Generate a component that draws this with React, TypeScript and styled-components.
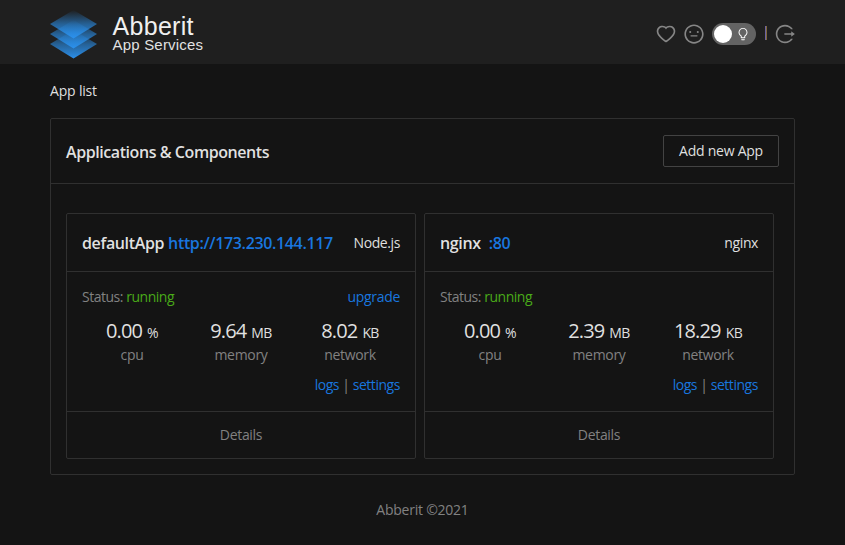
import React from "react";
import styled, { createGlobalStyle } from "styled-components";
import { AiOutlineHeart, AiOutlineMeh, AiOutlineBulb, AiOutlineLogout } from "react-icons/ai";

const GlobalStyle = createGlobalStyle`
  *, *::before, *::after { box-sizing: border-box; }
  body {
    margin: 0;
    background: #141414;
    color: rgba(255, 255, 255, 0.88);
    font: 14px/22px "Open Sans", "Noto Sans", sans-serif;
    letter-spacing: -0.3px;
    overflow: hidden;
  }
`;

const Page = styled.div`
  height: 545px;
  background: #141414;
`;

const Header = styled.header`
  display: flex;
  align-items: center;
  justify-content: space-between;
  height: 64px;
  padding: 0 50px;
  background: #1f1f1f;
`;

const Brand = styled.div`
  display: flex;
  align-items: center;
  height: 64px;
`;

const LogoMark = styled.svg`
  display: block;
  width: 47px;
  height: 50px;
  margin-top: 5px;
`;

const BrandText = styled.div`
  margin: 3px 0 0 15.5px;
  font-family: "Liberation Sans", Arial, sans-serif;
  letter-spacing: 0;
`;

const BrandName = styled.div`
  font-size: 25px;
  line-height: 22px;
  letter-spacing: 0.3px;
  color: #f0f0f0;
`;

const BrandSub = styled.div`
  font-size: 15px;
  line-height: 15px;
  letter-spacing: 0.2px;
`;

const Tools = styled.div`
  display: flex;
  align-items: center;
  height: 22px;
  margin-top: 4px;
  color: #868686;
  svg { display: block; }
`;

const ToolIcon = styled.span`
  width: 22px;
  height: 22px;
  margin-right: 6px;
  &:last-child { margin-right: -1px; }
`;

const Switch = styled.span`
  display: flex;
  align-items: center;
  justify-content: space-between;
  width: 44px;
  height: 22px;
  margin-left: 1px;
  padding: 0 6px 0 2px;
  border-radius: 11px;
  background: #636363;
  color: #fff;
`;

const Knob = styled.span`
  width: 18px;
  height: 18px;
  border-radius: 50%;
  background: #fff;
`;

const ToolDivider = styled.span`
  width: 2px;
  height: 14px;
  margin: 0 7px 2px 9px;
  background: linear-gradient(90deg, #6c62a0 50%, #80693b 50%);
`;

const Main = styled.main`
  padding: 0 50px;
`;

const Crumb = styled.div`
  padding: 16px 0;
  letter-spacing: -0.18px;
`;

const Panel = styled.section`
  height: 357px;
  border: 1px solid #303030;
  border-radius: 2px;
`;

const PanelHead = styled.div`
  display: flex;
  align-items: center;
  justify-content: space-between;
  height: 65px;
  padding: 2px 15px 0;
  border-bottom: 1px solid #303030;
`;

const PanelTitle = styled.div`
  font-size: 16px;
  font-weight: 600;
  letter-spacing: -0.43px;
`;

const AddButton = styled.button`
  width: 116px;
  height: 32px;
  margin-bottom: 2px;
  padding: 0;
  border: 1px solid #434343;
  border-radius: 2px;
  background: transparent;
  color: inherit;
  font: inherit;
  letter-spacing: -0.25px;
`;

const Cards = styled.div`
  display: flex;
  gap: 8px;
  padding: 29px 15px 0;
`;

const Card = styled.article`
  width: 350px;
  height: 246px;
  border: 1px solid #303030;
  border-radius: 2px;
`;

const CardHead = styled.div`
  display: flex;
  align-items: center;
  justify-content: space-between;
  height: 58px;
  padding: 1px 15px 0;
  border-bottom: 1px solid #303030;
`;

const CardTitle = styled.div<{ $gap: number }>`
  display: flex;
  gap: ${(p) => p.$gap}px;
  font-size: 16px;
  font-weight: 600;
  letter-spacing: -0.36px;
`;

const Runtime = styled.span`
  letter-spacing: -0.4px;
`;

const Link = styled.a`
  color: #1976df;
  text-decoration: none;
  cursor: pointer;
`;

const CardBody = styled.div`
  height: 139px;
  padding: 14px 15px 0;
  color: rgba(255, 255, 255, 0.47);
`;

const Line = styled.div`
  display: flex;
  justify-content: space-between;
`;

const Status = styled.span`
  letter-spacing: -0.48px;
`;

const Running = styled.span`
  color: #49aa19;
`;

const Stats = styled.div`
  display: grid;
  grid-template-columns: repeat(3, 109px);
  justify-content: center;
  margin-top: 11px;
  text-align: center;
`;

const Value = styled.div`
  font-size: 20px;
  line-height: 24px;
  letter-spacing: -0.85px;
  color: rgba(255, 255, 255, 0.88);
`;

const Unit = styled.span`
  margin-left: 5px;
  font-size: 14px;
  letter-spacing: -0.6px;
`;

const StatLabel = styled.div`
  margin-top: -1px;
  line-height: 22px;
`;

const CardLinks = styled.div`
  margin-top: 8px;
  text-align: right;
  letter-spacing: -0.45px;
`;

const Details = styled.div`
  height: 47px;
  padding-top: 12px;
  border-top: 1px solid #303030;
  color: rgba(255, 255, 255, 0.47);
  text-align: center;
`;

const Footer = styled.footer`
  padding-top: 24px;
  color: rgba(255, 255, 255, 0.47);
  letter-spacing: -0.24px;
  text-align: center;
`;

type App = {
  name: string;
  address: string;
  gap: number;
  runtime: string;
  upgradable: boolean;
  stats: { value: string; unit: string; label: string }[];
};

const apps: App[] = [
  {
    name: "defaultApp",
    address: "http://173.230.144.117",
    gap: 4,
    runtime: "Node.js",
    upgradable: true,
    stats: [
      { value: "0.00", unit: "%", label: "cpu" },
      { value: "9.64", unit: "MB", label: "memory" },
      { value: "8.02", unit: "KB", label: "network" },
    ],
  },
  {
    name: "nginx",
    address: ":80",
    gap: 8,
    runtime: "nginx",
    upgradable: false,
    stats: [
      { value: "0.00", unit: "%", label: "cpu" },
      { value: "2.39", unit: "MB", label: "memory" },
      { value: "18.29", unit: "KB", label: "network" },
    ],
  },
];

function Logo() {
  return (
    <LogoMark viewBox="0 0 47 50">
      <defs>
        <linearGradient id="layer" x1="0" y1="0" x2="0" y2="1">
          <stop offset="0" stopColor="#2a8ae0" stopOpacity="0" />
          <stop offset="0.5" stopColor="#2a8ae0" stopOpacity="0.62" />
          <stop offset="1" stopColor="#2b90ec" />
        </linearGradient>
      </defs>
      {[20, 10, 0].map((y) => (
        <path key={y} d={`M23.5 ${y}L47 ${y + 14}L23.5 ${y + 28.5}L0 ${y + 14}Z`} fill="url(#layer)" />
      ))}
    </LogoMark>
  );
}

function AppCard({ app }: { app: App }) {
  return (
    <Card>
      <CardHead>
        <CardTitle $gap={app.gap}>
          <span>{app.name}</span>
          <Link>{app.address}</Link>
        </CardTitle>
        <Runtime>{app.runtime}</Runtime>
      </CardHead>
      <CardBody>
        <Line>
          <Status>Status: <Running>running</Running></Status>
          {app.upgradable && <Link>upgrade</Link>}
        </Line>
        <Stats>
          {app.stats.map((s) => (
            <div key={s.label}>
              <Value>{s.value}<Unit>{s.unit}</Unit></Value>
              <StatLabel>{s.label}</StatLabel>
            </div>
          ))}
        </Stats>
        <CardLinks><Link>logs</Link> | <Link>settings</Link></CardLinks>
      </CardBody>
      <Details>Details</Details>
    </Card>
  );
}

export default function App() {
  return (
    <Page>
      <GlobalStyle />
      <Header>
        <Brand>
          <Logo />
          <BrandText>
            <BrandName>Abberit</BrandName>
            <BrandSub>App Services</BrandSub>
          </BrandText>
        </Brand>
        <Tools>
          <ToolIcon><AiOutlineHeart size={22} /></ToolIcon>
          <ToolIcon><AiOutlineMeh size={22} /></ToolIcon>
          <Switch><Knob /><AiOutlineBulb size={14} /></Switch>
          <ToolDivider />
          <ToolIcon><AiOutlineLogout size={22} /></ToolIcon>
        </Tools>
      </Header>
      <Main>
        <Crumb>App list</Crumb>
        <Panel>
          <PanelHead>
            <PanelTitle>Applications &amp; Components</PanelTitle>
            <AddButton>Add new App</AddButton>
          </PanelHead>
          <Cards>
            {apps.map((app) => <AppCard key={app.name} app={app} />)}
          </Cards>
        </Panel>
      </Main>
      <Footer>Abberit ©2021</Footer>
    </Page>
  );
}
